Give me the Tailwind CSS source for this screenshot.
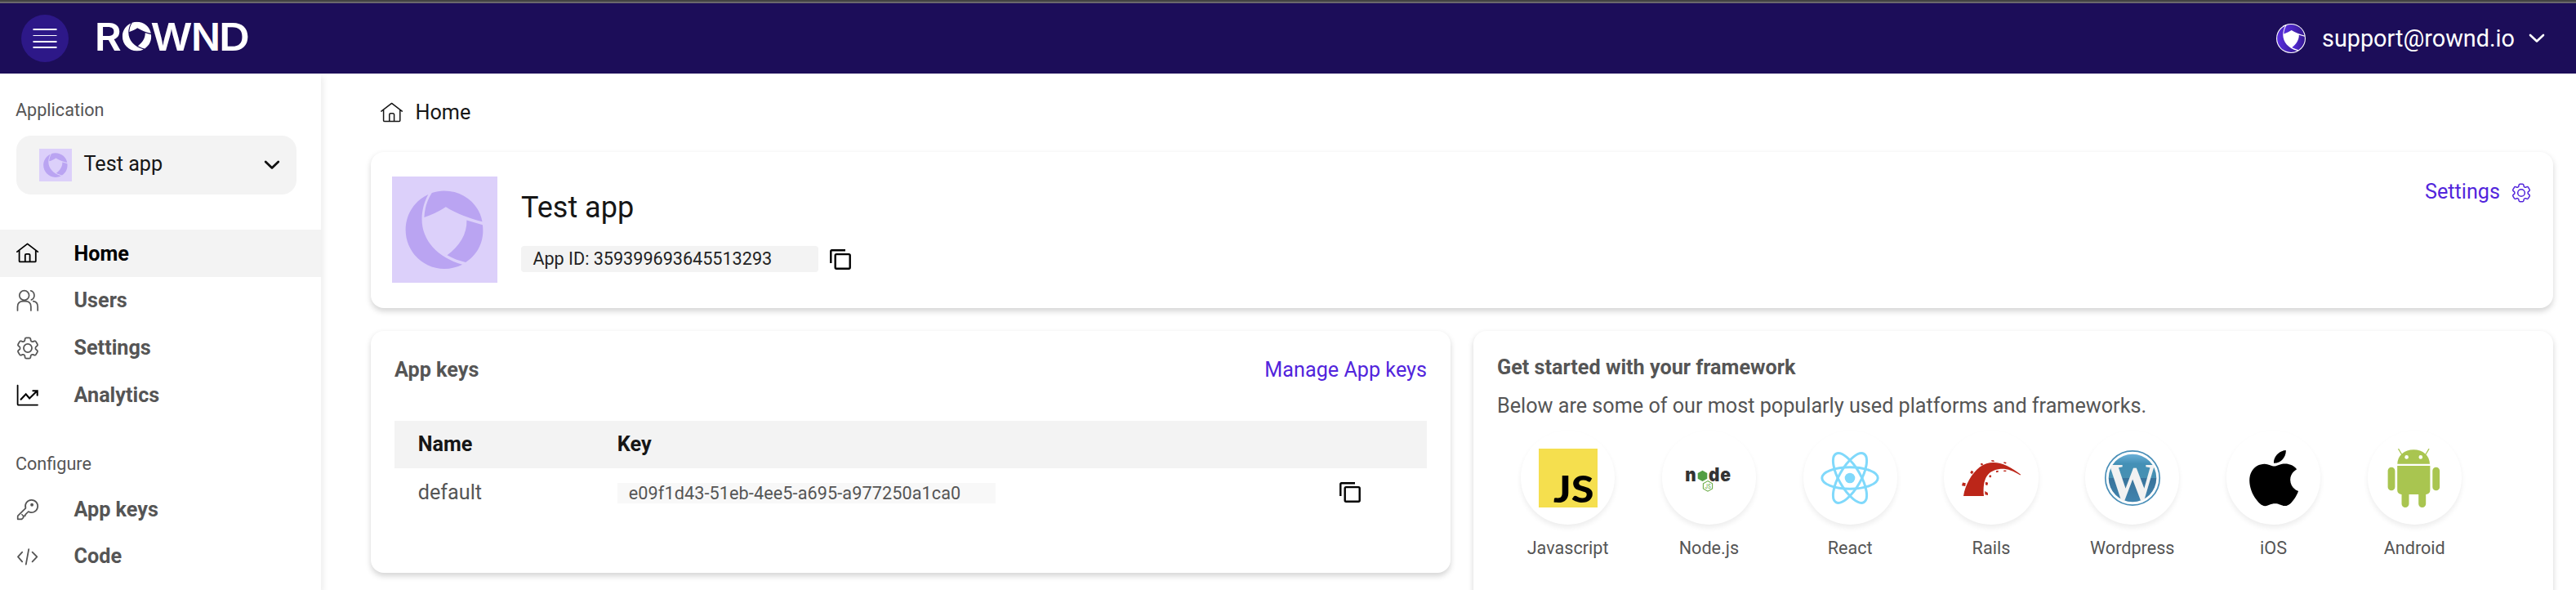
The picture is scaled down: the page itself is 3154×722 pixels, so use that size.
<!DOCTYPE html>
<html lang="en">
<head>
<meta charset="utf-8">
<title>Rownd – Home</title>
<script src="https://cdn.jsdelivr.net/npm/@tailwindcss/browser@4"></script>
</head>
<body class="bg-white w-[3154px] h-[722px] overflow-hidden font-['Roboto',sans-serif] text-[25.2px] leading-[30px] text-[#555]">
<svg class="hidden">
  <symbol id="emblem" viewBox="0 0 129.6 129.6">
    <path fill="currentColor" d="M49 19.7C54 17.8 59 17 64 17C88 17 107 33 111 54.9C95 51 79 45 66.1 37C58 42.5 49 46.5 39.6 49.7C40 39 43 29 49 19.7Z"/>
    <path fill="currentColor" d="M44.5 21.7C27.5 29.5 16.7 46 16.7 65C16.7 91.5 38 113 64.5 113C72 113 80 111 86.5 107.7C56 99 36.7 78 36.7 52C36.7 41 39.5 31 44.5 21.7Z"/>
    <path fill="currentColor" d="M91.8 53.3L111.4 59C114 78 106 95 90.6 105C82 103 75 100.5 67.8 96.3C83 85 92.5 70 91.8 53.3Z"/>
  </symbol>
  <symbol id="home" viewBox="0 0 28 28">
    <path fill="none" stroke="currentColor" stroke-linecap="round" stroke-linejoin="round" d="M.9 12.1L13.6 2.4L26.3 12.1M3.6 10.4V23.4a1 1 0 0 0 1 1H22.8a1 1 0 0 0 1-1V10.4M10.8 24V16.3a1.5 1.5 0 0 1 1.5-1.5h2.8a1.5 1.5 0 0 1 1.5 1.5V24"/>
  </symbol>
  <symbol id="gear" viewBox="2 2 20 20">
    <path fill="none" stroke="currentColor" stroke-linejoin="round" d="M9.594 3.94c.09-.542.56-.94 1.11-.94h2.593c.55 0 1.02.398 1.11.94l.213 1.281c.063.374.313.686.645.87.074.04.147.083.22.127.325.196.72.257 1.075.124l1.217-.456a1.125 1.125 0 0 1 1.37.49l1.296 2.247a1.125 1.125 0 0 1-.26 1.431l-1.003.827c-.293.241-.438.613-.43.992a7.723 7.723 0 0 1 0 .255c-.008.378.137.75.43.991l1.004.827c.424.35.534.955.26 1.43l-1.298 2.247a1.125 1.125 0 0 1-1.369.491l-1.217-.456c-.355-.133-.75-.072-1.076.124a6.47 6.47 0 0 1-.22.128c-.331.183-.581.495-.644.869l-.213 1.281c-.09.543-.56.94-1.11.94h-2.594c-.55 0-1.019-.398-1.11-.94l-.213-1.281c-.062-.374-.312-.686-.644-.87a6.52 6.52 0 0 1-.22-.127c-.325-.196-.72-.257-1.076-.124l-1.217.456a1.125 1.125 0 0 1-1.369-.49l-1.297-2.247a1.125 1.125 0 0 1 .26-1.431l1.004-.827c.292-.24.437-.613.43-.991a6.932 6.932 0 0 1 0-.255c.007-.38-.138-.751-.43-.992l-1.004-.827a1.125 1.125 0 0 1-.26-1.43l1.297-2.247a1.125 1.125 0 0 1 1.37-.491l1.216.456c.356.133.751.072 1.076-.124.072-.044.146-.086.22-.128.332-.183.582-.495.644-.869l.214-1.28Z"/>
    <circle cx="12" cy="12" r="3.6" fill="none" stroke="currentColor"/>
  </symbol>
  <symbol id="copy" viewBox="0 0 26 25">
    <path fill="none" stroke="currentColor" stroke-width="2.4" d="M1.3 17V2.3a1 1 0 0 1 1-1H19"/>
    <rect x="6.7" y="6.1" width="18" height="17.6" rx="1.4" fill="none" stroke="currentColor" stroke-width="2.4"/>
  </symbol>
</svg>

<div class="h-[2px] bg-[#434343]"></div>
<div class="h-[2px] bg-[#6a676c]"></div>
<header class="flex h-[86px] items-center bg-[#1c0d59] pl-[26px] pr-[38px] text-white">
  <div class="flex size-[58px] items-center justify-center rounded-full bg-[#2d1888]">
    <svg class="block" width="30" height="26" viewBox="0 0 30 26"><path fill="#fff" d="M.5 1h29v2h-29zM.5 9h29v1h-29zM.5 16h29v2h-29zM.5 23h29v2h-29z"/></svg>
  </div>
  <svg class="ml-[28px] -mt-[4px] block overflow-visible" width="202" height="66" viewBox="-6 -10 202 66" fill="#fff" font-family="Inter, sans-serif" font-weight="600" font-size="46.5">
    <text x="-2.2" y="40" textLength="33" lengthAdjust="spacingAndGlyphs">R</text>
    <svg x="31.6" y="4.6" width="36" height="36" viewBox="16 16.5 97 97"><use href="#emblem" width="129.6" height="129.6"/></svg>
    <text x="66.6" y="40" textLength="51" lengthAdjust="spacingAndGlyphs">W</text>
    <text x="116" y="40" textLength="36" lengthAdjust="spacingAndGlyphs">N</text>
    <text x="149.9" y="40" textLength="38" lengthAdjust="spacingAndGlyphs">D</text>
  </svg>
  <div class="ml-auto flex items-center">
    <svg class="block" width="36" height="36" viewBox="0 0 36 36">
      <defs><linearGradient id="eg" x1="0" x2="1"><stop offset="0" stop-color="#5a2ee0"/><stop offset="1" stop-color="#33178f"/></linearGradient></defs>
      <circle cx="18" cy="18" r="18" fill="#fff"/>
      <g transform="translate(.9 .9) scale(.3545) translate(-16 -16.8)" fill="url(#eg)">
        <path d="M49 19.7C54 17.8 59 17 64 17C88 17 107 33 111 54.9C95 51 79 45 66.1 37C58 42.5 49 46.5 39.6 49.7C40 39 43 29 49 19.7Z"/>
        <path d="M44.5 21.7C27.5 29.5 16.7 46 16.7 65C16.7 91.5 38 113 64.5 113C72 113 80 111 86.5 107.7C56 99 36.7 78 36.7 52C36.7 41 39.5 31 44.5 21.7Z"/>
        <path d="M91.8 53.3L111.4 59C114 78 106 95 90.6 105C82 103 75 100.5 67.8 96.3C83 85 92.5 70 91.8 53.3Z"/>
      </g>
    </svg>
    <span class="ml-[20px] text-[28.8px] leading-[34px]">support@rownd.io</span>
    <svg class="ml-[17px] block" width="20" height="12" viewBox="0 0 20 12"><path d="M2 2L10 9.5L18 2" fill="none" stroke="#fff" stroke-width="2.6" stroke-linecap="round" stroke-linejoin="round"/></svg>
  </div>
</header>

<div class="flex h-[632px]">
  <aside class="w-[393px] shrink-0 bg-white shadow-[3px_4px_7px_rgba(0,0,0,0.07)]">
    <div class="pt-[30px] pl-[19px] text-[21.6px]">Application</div>
    <div class="mt-[16px] ml-[20px] flex h-[72px] w-[343px] items-center rounded-[18px] bg-[#f3f3f3] pr-[20px] pl-[28px] text-[#161616]">
      <div class="size-[40px] bg-[#dcd0fa] text-[#baa4f2]"><svg class="block size-full"><use href="#emblem"/></svg></div>
      <span class="ml-[14.5px] -mt-[3px]">Test app</span>
      <svg class="ml-auto block" width="20" height="12" viewBox="0 0 20 12"><path d="M2.2 2L10 9.5L17.8 2" fill="none" stroke="#111" stroke-width="2.8" stroke-linecap="round" stroke-linejoin="round"/></svg>
    </div>
    <nav class="mt-[43px] font-bold">
      <div class="flex h-[57.6px] items-center bg-[#f3f3f3] pt-[2px] pl-[20px] text-black"><svg class="mr-[42.5px] -mt-[1px] size-[28px]" stroke-width="1.8"><use href="#home"/></svg>Home</div>
      <div class="flex h-[57.6px] items-center pt-[2px] pl-[20px]">
        <svg class="mr-[42.5px] -mt-[1px] size-[28px]" viewBox="0 0 28 28" fill="none" stroke="currentColor" stroke-width="1.7" stroke-linecap="round"><circle cx="9.7" cy="7.5" r="5.9"/><path d="M17.6 1.8a5.9 5.9 0 0 1 .8 11.1M1.5 26v-4.6c0-4.4 2.6-6.8 7-6.8h2.4c4.4 0 7 2.4 7 6.8V26M20.7 14.6c3.6.5 5.5 2.9 5.5 6.6V26"/></svg>Users</div>
      <div class="flex h-[57.6px] items-center pt-[2px] pl-[20px]"><svg class="mr-[43px] ml-[-.5px] size-[28px]" stroke-width="1.25"><use href="#gear"/></svg>Settings</div>
      <div class="flex h-[57.6px] items-center pt-[2px] pl-[20px]">
        <svg class="mr-[42.5px] -mt-[1px] size-[28px]" viewBox="0 0 28 28" fill="none" stroke="#000" stroke-width="1.8" stroke-linecap="round" stroke-linejoin="round"><path d="M1.6 2.6V25.6a1 1 0 0 0 1 1H26"/><path stroke-width="2.1" stroke-linejoin="miter" d="M5.6 19.8L11.7 13.3L16.1 18.4L25.2 9.6M20.4 9.3H25.7V14.8"/></svg>Analytics</div>
      <div class="mt-[42.5px] mb-[12px] pl-[19px] text-[21.6px] font-normal leading-[28px]">Configure</div>
      <div class="flex h-[57.6px] items-center pt-[2px] pl-[20px]">
        <svg class="mr-[42.5px] -mt-[1px] size-[28px]" viewBox="0 0 28 28" fill="none" stroke="currentColor" stroke-width="1.7" stroke-linejoin="round" stroke-linecap="round"><path d="M11.4 12.8L2.2 21.8Q1.7 22.4 1.7 23V26.3H6.6L8.6 24.4V22.4H10.6L11.2 20.6L14.8 17A7.6 7.6 0 1 0 11.4 12.8Z"/><path d="M6.8 20.6l1.1 1.1" stroke-width="1.4"/><circle cx="19.1" cy="8.7" r="1.1" fill="currentColor"/></svg>App keys</div>
      <div class="flex h-[57.6px] items-center pt-[2px] pl-[20px]">
        <svg class="mr-[42.5px] -mt-[1px] size-[28px]" viewBox="0 0 28 28" fill="none" stroke="currentColor" stroke-width="1.8" stroke-linejoin="round" stroke-linecap="round"><path d="M7.2 8.6L2 14.4L7.2 20.3M19.6 8.6L25.3 14.4L19.6 20.3M15.2 5.2L11.8 23.6"/></svg>Code</div>
    </nav>
  </aside>

  <main class="min-w-0 flex-1 pl-[61px] pr-[28px]">
    <div class="flex h-[96px] items-center pl-[12px] text-[#161616]"><svg class="mr-[14.5px] size-[28px]" stroke-width="1.5"><use href="#home"/></svg><span>Home</span></div>

    <section class="flex h-[191px] rounded-[16px] bg-white pt-[30px] pr-[27px] pl-[26px] shadow-[0_3.6px_7.2px_rgba(0,0,0,0.17)]">
      <div class="h-[130px] w-[129px] bg-[#dcd0fa] text-[#baa4f2]"><svg class="block size-full"><use href="#emblem"/></svg></div>
      <div class="ml-[29px] pt-[17px]">
        <div class="text-[36px] leading-[43px] text-[#161616]">Test app</div>
        <div class="mt-[25px] flex items-center">
          <div class="h-[32px] w-[364px] rounded-[4px] bg-[#f3f3f3] pl-[14.4px] text-[21.6px] leading-[32px] text-[#222]">App ID: 359399693645513293</div>
          <svg class="ml-[14px] h-[25px] w-[26px] text-black"><use href="#copy"/></svg>
        </div>
      </div>
      <div class="ml-auto flex h-[38px] items-center text-[#5225dc]">Settings<svg class="ml-[14px] mt-[2px] size-[24px]" stroke-width="1.25"><use href="#gear"/></svg></div>
    </section>

    <div class="mt-[28px] flex gap-[28px]">
      <section class="h-[296px] flex-1 rounded-[16px] bg-white px-[29px] pt-[33px] shadow-[0_3.6px_7.2px_rgba(0,0,0,0.17)]">
        <div class="flex justify-between"><span class="font-bold">App keys</span><span class="text-[#5225dc]">Manage App keys</span></div>
        <div class="mt-[47px] flex h-[58px] items-center bg-[#f3f3f3] pl-[28.8px] font-bold text-[#161616]"><span class="w-[244px]">Name</span><span>Key</span></div>
        <div class="flex h-[58px] items-center pl-[28.8px]">
          <span class="mt-[2px] w-[244px]">default</span>
          <span class="mt-[3px] h-[25px] w-[463px] bg-[#f8f8f8] pl-[14px] text-[21.6px] leading-[25px] tracking-[0.11px]">e09f1d43-51eb-4ee5-a695-a977250a1ca0</span>
          <svg class="mr-[81px] ml-auto h-[25px] w-[26px] text-black"><use href="#copy"/></svg>
        </div>
      </section>

      <section class="h-[340px] flex-1 rounded-[16px] bg-white px-[29px] pt-[30px] shadow-[0_3.6px_7.2px_rgba(0,0,0,0.17)]">
        <div class="font-bold">Get started with your framework</div>
        <div class="mt-[17px]">Below are some of our most popularly used platforms and frameworks.</div>
        <div class="mt-[15px] ml-[29px] flex gap-[57.6px] text-[21.6px] leading-[26px]">
          <div class="flex w-[115.2px] flex-col items-center">
            <div class="flex size-[115.2px] items-center justify-center rounded-full shadow-[0_4px_6px_rgba(0,0,0,0.07)]">
              <svg width="72" height="72" viewBox="0 0 72 72"><path fill="#f5df4e" d="M0 0h72v72H0z"/><text x="18" y="66.3" font-family="Lato, sans-serif" font-weight="900" font-size="46" textLength="49.5" lengthAdjust="spacingAndGlyphs">JS</text></svg>
            </div>
            <span class="mt-[16px]">Javascript</span>
          </div>
          <div class="flex w-[115.2px] flex-col items-center">
            <div class="flex size-[115.2px] items-center justify-center rounded-full shadow-[0_4px_6px_rgba(0,0,0,0.07)]">
              <svg width="72" height="72" viewBox="0 0 72 72" font-family="Inter, sans-serif" font-weight="900" font-size="22.5" fill="#333">
                <text x="7.2" y="39.6" textLength="13.4" lengthAdjust="spacingAndGlyphs">n</text>
                <path fill="#539e43" d="M28.5 26.8l5.8 3.3v6.6l-5.8 3.3-5.8-3.3v-6.6z"/>
                <text x="36" y="39.6" textLength="13.4" lengthAdjust="spacingAndGlyphs">d</text>
                <text x="50.2" y="39.6" textLength="12.8" lengthAdjust="spacingAndGlyphs">e</text>
                <path fill="none" stroke="#6cac48" stroke-width="1.1" d="M35 39.6l5.6 3.2v6.2l-5.6 3.2-5.6-3.2v-6.2z"/>
                <text x="31.6" y="48.6" fill="#6cac48" font-size="7" font-weight="500" textLength="7.2" lengthAdjust="spacingAndGlyphs">JS</text>
              </svg>
            </div>
            <span class="mt-[16px]">Node.js</span>
          </div>
          <div class="flex w-[115.2px] flex-col items-center">
            <div class="flex size-[115.2px] items-center justify-center rounded-full shadow-[0_4px_6px_rgba(0,0,0,0.07)]">
              <svg width="72" height="72" viewBox="0 0 72 72" fill="none" stroke="#80d9fb" stroke-width="3"><circle cx="36" cy="36" r="6.3" fill="#80d9fb" stroke="none"/><ellipse cx="36" cy="36" rx="34.2" ry="13.2"/><ellipse cx="36" cy="36" rx="34.2" ry="13.2" transform="rotate(60 36 36)"/><ellipse cx="36" cy="36" rx="34.2" ry="13.2" transform="rotate(120 36 36)"/></svg>
            </div>
            <span class="mt-[16px]">React</span>
          </div>
          <div class="flex w-[115.2px] flex-col items-center">
            <div class="flex size-[115.2px] items-center justify-center rounded-full shadow-[0_4px_6px_rgba(0,0,0,0.07)]">
              <svg width="72" height="72" viewBox="0 0 72 72" fill="#bc2619"><path d="M2 58C4 45 12 30 22 22.5C37 11.5 55 18 72 31.6L71.6 32.6C62 26.6 54 24 46 25C32 27 25 36 27 58Z"/>
              <path d="M1 41.5l3.8.8-.6 3.8-4.2-.8zM11.8 26.8l2.6 1.4-1.8 3-2.4-1.6zM23.6 17.8l2 .5.3 1.8-2.2.4-.7-1.4zM36 14.2h3l1 1.8-3.4-.2zM51.6 16.2l3 .9-.6 1.5-2.8-.9zM51.5 26.4l3 .3-.3 1.3-3.1-.1zM41.8 27.3l2.7-.5.4 1.6-2.6.8zM34 32.3l2.3.8-.9 2.3-2.2-1zM29 40.8l3.2.9-.9 3.3-2.4-.8zM28.2 52l3.6 1.9.2 3-3.5-.6z"/></svg>
            </div>
            <span class="mt-[16px]">Rails</span>
          </div>
          <div class="flex w-[115.2px] flex-col items-center">
            <div class="flex size-[115.2px] items-center justify-center rounded-full shadow-[0_4px_6px_rgba(0,0,0,0.07)]">
              <svg width="72" height="72" viewBox="0 0 72 72">
                <defs><linearGradient id="wp" x1="0" y1="0" x2="0" y2="1"><stop offset="0" stop-color="#6bb0d8"/><stop offset=".2" stop-color="#4490b6"/><stop offset=".5" stop-color="#4790b2"/><stop offset=".5" stop-color="#39739b"/><stop offset="1" stop-color="#4184ae"/></linearGradient>
                <clipPath id="wpc"><circle cx="36" cy="36" r="30"/></clipPath></defs>
                <circle cx="36" cy="36" r="33.2" fill="#fff" stroke="#4a8fb8" stroke-width="1.7"/>
                <circle cx="36" cy="36" r="29.3" fill="url(#wp)"/>
                <g clip-path="url(#wpc)"><text x="4.5" y="63" font-family="Liberation Serif, serif" font-weight="700" font-size="65" fill="#f2f2f2" textLength="62" lengthAdjust="spacingAndGlyphs">W</text></g>
              </svg>
            </div>
            <span class="mt-[16px]">Wordpress</span>
          </div>
          <div class="flex w-[115.2px] flex-col items-center">
            <div class="flex size-[115.2px] items-center justify-center rounded-full shadow-[0_4px_6px_rgba(0,0,0,0.07)]">
              <svg width="72" height="72" viewBox="0 0 72 72"><path transform="translate(-.6 2) scale(3.06 2.84)" d="M12.152 6.896c-.948 0-2.415-1.078-3.96-1.04-2.04.027-3.91 1.183-4.961 3.014-2.117 3.675-.546 9.103 1.519 12.09 1.013 1.454 2.208 3.09 3.792 3.039 1.52-.065 2.09-.987 3.935-.987 1.831 0 2.35.987 3.96.948 1.637-.026 2.676-1.48 3.676-2.948 1.156-1.688 1.636-3.325 1.662-3.415-.039-.013-3.182-1.221-3.22-4.857-.026-3.04 2.48-4.494 2.597-4.559-1.429-2.09-3.623-2.324-4.39-2.376-2-.156-3.675 1.09-4.61 1.09zM15.53 3.83c.843-1.012 1.4-2.427 1.245-3.83-1.207.052-2.662.805-3.532 1.818-.78.896-1.454 2.338-1.273 3.714 1.338.104 2.715-.688 3.559-1.701"/></svg>
            </div>
            <span class="mt-[16px]">iOS</span>
          </div>
          <div class="flex w-[115.2px] flex-col items-center">
            <div class="flex size-[115.2px] items-center justify-center rounded-full shadow-[0_4px_6px_rgba(0,0,0,0.07)]">
              <svg width="72" height="72" viewBox="0 0 72 72" fill="#a9c550"><path d="M15.3 18.8C15.3 8.5 24 1.2 35.2 1.2S55 8.5 55 18.8zM15.2 21H55.4V51a5 5 0 0 1-5 5H20.2a5 5 0 0 1-5-5z"/><rect x="3.6" y="22.7" width="8.8" height="28.6" rx="4.4"/><rect x="58.3" y="22.7" width="8.8" height="28.6" rx="4.4"/><path d="M20.5 55h9V67.5a4.5 4.5 0 0 1-9 0zM41.2 55h9V67.5a4.5 4.5 0 0 1-9 0z"/><path d="M16.8.6L20.6 7M53.8.6L50 7" stroke="#a9c550" stroke-width="1.3" stroke-linecap="round"/><circle cx="26.6" cy="10.4" r="2.3" fill="#fff"/><circle cx="43.8" cy="10.4" r="2.3" fill="#fff"/></svg>
            </div>
            <span class="mt-[16px]">Android</span>
          </div>
        </div>
      </section>
    </div>
  </main>
</div>
</body>
</html>
